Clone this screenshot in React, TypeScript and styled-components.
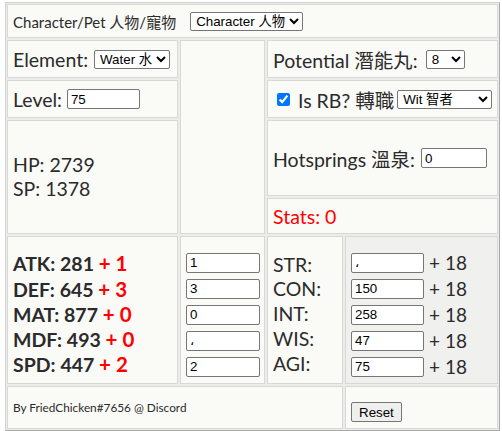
import React from "react";
import styled, { createGlobalStyle } from "styled-components";

const GlobalStyle = createGlobalStyle`
  html, body { margin: 0; padding: 0; background: #ffffff; }
  body { font-family: Lato, "Noto Sans CJK TC", sans-serif; color: #2b2b2b; }
`;

const Board = styled.div`
  margin: 2px 0 0 5px;
  width: 495px;
  box-sizing: border-box;
  display: grid;
  grid-template-columns: 171px 85px 76px 153px;
  grid-template-rows: 34px 38px 38px 76px 36px 148px 43px;
  gap: 2px;
  padding: 1px;
  background: #ececea;
  border: 1px solid;
  border-color: #d2d2d2 #a9a9a9 #a9a9a9 #d2d2d2;
  grid-template-areas:
    "top top top top"
    "elem blank pot pot"
    "lvl blank rb rb"
    "hp blank hot hot"
    "hp blank stats stats"
    "base alloc names points"
    "credit credit credit reset";
`;

const Cell = styled.div<{ $area: string; $tone?: "plain" | "shade"; $pt?: number }>`
  grid-area: ${(p) => p.$area};
  box-sizing: border-box;
  border: 1px solid #d8d8d5;
  background: ${(p) => (p.$tone === "shade" ? "#f0f0ee" : "#fafaf7")};
  padding: ${(p) => p.$pt ?? 0}px 5px 0 5px;
  display: flex;
  align-items: center;
  white-space: nowrap;
  font-size: 19.5px;
`;

const Column = styled.div<{ $lh: number }>`
  display: flex;
  flex-direction: column;
  line-height: ${(p) => p.$lh}px;
`;

const Small = styled.span<{ $size: number }>`
  font-size: ${(p) => p.$size}px;
`;

const Red = styled.span<{ $size?: number; $bold?: boolean }>`
  color: #ff0000;
  font-size: ${(p) => (p.$size ? `${p.$size}px` : "inherit")};
  font-weight: ${(p) => (p.$bold ? 700 : 400)};
`;

const Field = styled.input<{ $w: number; $ml?: number }>`
  box-sizing: border-box;
  width: ${(p) => p.$w}px;
  height: 20px;
  margin: 0 0 0 ${(p) => p.$ml ?? 0}px;
  padding: 1px 3px;
  border: 1px solid #767676;
  border-radius: 2px;
  background: #ffffff;
  font-family: "Liberation Sans", Arial, sans-serif;
  font-size: 13.33px;
  color: #000;
`;

const Picker = styled.select<{ $w: number; $ml?: number }>`
  box-sizing: border-box;
  width: ${(p) => p.$w}px;
  height: 19px;
  margin: 0 0 0 ${(p) => p.$ml ?? 4}px;
  padding: 0 1px;
  border: 1px solid #767676;
  border-radius: 2px;
  background: #ffffff;
  font-family: "Liberation Sans", Arial, "Noto Sans CJK TC", sans-serif;
  font-size: 13.33px;
  color: #000;
`;

const Check = styled.input`
  width: 13px;
  height: 13px;
  margin: 0 8px 0 4px;
  accent-color: #0075ff;
`;

const Stack = styled.div`
  display: flex;
  flex-direction: column;
  gap: 6px;
`;

const StackRow = styled.div`
  display: flex;
  align-items: center;
  gap: 5px;
  height: 20px;
  font-size: 19px;
`;

const StatLine = styled.div`
  font-weight: 700;
`;

const Button = styled.button`
  height: 20px;
  padding: 0 7px;
  margin-top: 9px;
  border: 1px solid #767676;
  border-radius: 2px;
  background: #efefef;
  font-family: "Liberation Sans", Arial, sans-serif;
  font-size: 13.33px;
  color: #000;
`;

const base = [
  ["ATK", 281, 1],
  ["DEF", 645, 3],
  ["MAT", 877, 0],
  ["MDF", 493, 0],
  ["SPD", 447, 2],
] as const;

const alloc = ["1", "3", "0", "،", "2"];
const names = ["STR:", "CON:", "INT:", "WIS:", "AGI:"];
const points = ["،", "150", "258", "47", "75"];

export default function App() {
  return (
    <>
      <GlobalStyle />
      <Board>
        <Cell $area="top">
          <Small $size={15}>Character/Pet 人物/寵物</Small>
          <Picker $w={113} $ml={14} defaultValue="c">
            <option value="c">Character 人物</option>
            <option value="p">Pet 寵物</option>
          </Picker>
        </Cell>

        <Cell $area="elem">
          Element:
          <Picker $w={76} $ml={6} defaultValue="w">
            <option value="w">Water 水</option>
          </Picker>
        </Cell>
        <Cell $area="blank" />
        <Cell $area="pot">
          Potential 潛能丸:
          <Picker $w={39} $ml={8} defaultValue="8">
            <option value="8">8</option>
          </Picker>
        </Cell>

        <Cell $area="lvl">
          Level:
          <Field $w={73} $ml={5} defaultValue="75" />
        </Cell>
        <Cell $area="rb">
          <Check type="checkbox" defaultChecked />
          Is RB? 轉職
          <Picker $w={98} $ml={3} defaultValue="wit">
            <option value="wit">Wit 智者</option>
          </Picker>
        </Cell>

        <Cell $area="hp">
          <Column $lh={24}>
            <span>HP: 2739</span>
            <span>SP: 1378</span>
          </Column>
        </Cell>
        <Cell $area="hot">
          Hotsprings 溫泉:
          <Field $w={66} $ml={6} defaultValue="0" />
        </Cell>
        <Cell $area="stats">
          <Red>Stats: 0</Red>
        </Cell>

        <Cell $area="base" $pt={9}>
          <Column $lh={24.2}>
            {base.map(([k, v, b]) => (
              <StatLine key={k}>
                {k}: {v} <Red $size={20.5} $bold>+ {b}</Red>
              </StatLine>
            ))}
          </Column>
        </Cell>
        <Cell $area="alloc" $pt={9}>
          <Stack>
            {alloc.map((v, i) => (
              <Field key={i} $w={74} defaultValue={v} />
            ))}
          </Stack>
        </Cell>
        <Cell $area="names" $pt={9}>
          <Column $lh={24.8}>
            {names.map((n) => (
              <span key={n}>{n}</span>
            ))}
          </Column>
        </Cell>
        <Cell $area="points" $tone="shade" $pt={9}>
          <Stack>
            {points.map((v, i) => (
              <StackRow key={i}>
                <Field $w={73} defaultValue={v} />
                <span>+ 18</span>
              </StackRow>
            ))}
          </Stack>
        </Cell>

        <Cell $area="credit">
          <Small $size={11.8}>By FriedChicken#7656 @ Discord</Small>
        </Cell>
        <Cell $area="reset">
          <Button type="button">Reset</Button>
        </Cell>
      </Board>
    </>
  );
}
